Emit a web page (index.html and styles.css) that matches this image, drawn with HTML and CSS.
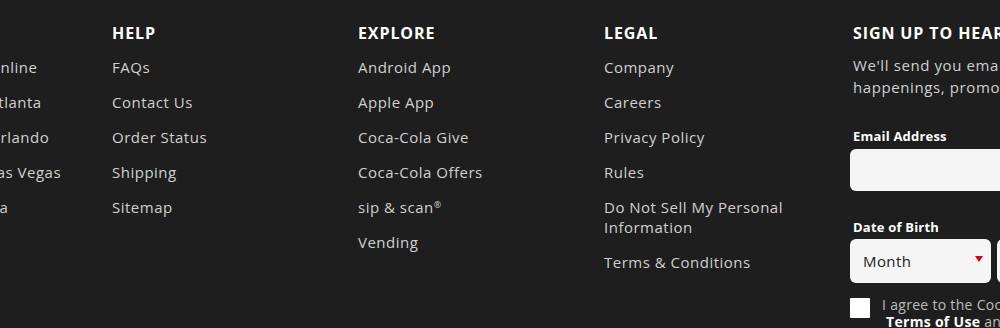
FILE: index.html
```html
<!DOCTYPE html>
<html>
<head>
<meta charset="utf-8">
<link rel="stylesheet" href="styles.css">
</head>
<body>
<footer class="footer">
  <div class="cols">
    <nav class="col">
      <h3 class="col-title">SHOP</h3>
      <ul class="links">
        <li>Coca-Cola Store Online</li>
        <li>Coca-Cola Store Atlanta</li>
        <li>Coca-Cola Store Orlando</li>
        <li>Coca-Cola Store Las Vegas</li>
        <li>World of Coca-Cola</li>
      </ul>
    </nav>
    <nav class="col">
      <h3 class="col-title">HELP</h3>
      <ul class="links">
        <li>FAQs</li>
        <li>Contact Us</li>
        <li>Order Status</li>
        <li>Shipping</li>
        <li>Sitemap</li>
      </ul>
    </nav>
    <nav class="col">
      <h3 class="col-title">EXPLORE</h3>
      <ul class="links">
        <li>Android App</li>
        <li>Apple App</li>
        <li>Coca-Cola Give</li>
        <li>Coca-Cola Offers</li>
        <li>sip &amp; scan<sup class="reg">®</sup></li>
        <li>Vending</li>
      </ul>
    </nav>
    <nav class="col">
      <h3 class="col-title">LEGAL</h3>
      <ul class="links">
        <li>Company</li>
        <li>Careers</li>
        <li>Privacy Policy</li>
        <li>Rules</li>
        <li>Do Not Sell My Personal<br>Information</li>
        <li>Terms &amp; Conditions</li>
      </ul>
    </nav>
    <section class="signup">
      <h3 class="col-title">SIGN UP TO HEAR ABOUT OFFERS</h3>
      <p class="intro">We'll send you emails about new products, exclusive<br>happenings, promotions and more.</p>
      <label class="field-label">Email Address</label>
      <div class="input"></div>
      <label class="field-label dob">Date of Birth</label>
      <div class="selects">
        <div class="select">Month<span class="caret"></span></div>
        <div class="select">Day<span class="caret"></span></div>
      </div>
      <div class="agree">
        <span class="box"></span>
        <span class="agree-text">I agree to the Coca-Cola Store<br><b>Terms of Use</b> and <b>Privacy Policy</b></span>
      </div>
    </section>
  </div>
</footer>
</body>
</html>
```

FILE: styles.css
```css
html, body {
  margin: 0;
  padding: 0;
  background: #1e1e1e;
  overflow: hidden;
}
body {
  width: 1000px;
  height: 328px;
  font-family: "Open Sans", "Liberation Sans", sans-serif;
}
.footer {
  height: 328px;
  overflow: hidden;
}
.cols {
  display: flex;
  margin-left: -134px;
  padding-top: 23px;
}
.col {
  flex: 0 0 246px;
}
.col-title {
  margin: 0;
  font-size: 16px;
  line-height: 20px;
  font-weight: 700;
  color: #ffffff;
  letter-spacing: 0.9px;
  white-space: nowrap;
}
.links {
  list-style: none;
  margin: 14px 0 0;
  padding: 0;
  display: flex;
  flex-direction: column;
  gap: 15px;
}
.links li {
  font-size: 15px;
  line-height: 20px;
  color: #d0d0d0;
  letter-spacing: 0.5px;
  white-space: nowrap;
}
.reg {
  font-size: 9px;
  vertical-align: 5px;
  line-height: 0;
}
.signup {
  flex: 0 0 400px;
  padding-left: 3px;
}
.intro {
  margin: 11px 0 0;
  font-size: 15px;
  line-height: 22px;
  color: #d0d0d0;
  letter-spacing: 0.6px;
  white-space: nowrap;
}
.field-label {
  display: block;
  margin-top: 29px;
  font-size: 13px;
  line-height: 18px;
  font-weight: 700;
  color: #ffffff;
  letter-spacing: 0.2px;
}
.field-label.dob {
  margin-top: 27px;
}
.input {
  margin: 4px 0 0 -3px;
  height: 42px;
  width: 380px;
  background: #f5f5f5;
  border-radius: 6px;
}
.selects {
  display: flex;
  gap: 6px;
  margin: 3px 0 0 -3px;
}
.select {
  position: relative;
  width: 128px;
  height: 44px;
  padding-left: 13px;
  background: #f5f5f5;
  border-radius: 6px;
  font-size: 15px;
  line-height: 44px;
  color: #222;
  letter-spacing: 0.4px;
}
.caret {
  position: absolute;
  right: 8px;
  top: 17px;
  width: 0;
  height: 0;
  border-left: 4px solid transparent;
  border-right: 4px solid transparent;
  border-top: 6px solid #e4000b;
}
.agree {
  display: flex;
  gap: 12px;
  margin: 15px 0 0 -3px;
}
.box {
  flex: 0 0 20px;
  height: 20px;
  background: #ffffff;
  border-radius: 1px;
}
.agree-text {
  font-size: 14px;
  line-height: 17px;
  color: #bdbdbd;
  margin-top: -2px;
  letter-spacing: 0.3px;
  white-space: nowrap;
}
.agree-text b {
  color: #ffffff;
  margin-left: 4px;
}
.agree-text b + b {
  margin-left: 0;
}
```
